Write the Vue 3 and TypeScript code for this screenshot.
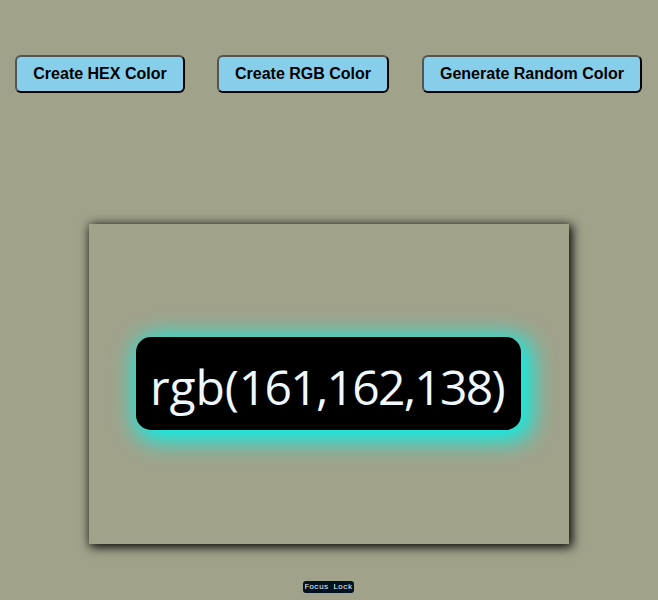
<script setup lang="ts">
import { computed, ref } from 'vue'

const color = ref('rgb(161,162,138)')
const rnd = (): number => Math.floor(Math.random() * 256)

const prefix = computed(() => (color.value.startsWith('rgb(') ? 'rgb(' : '#'))
const digits = computed(() => color.value.slice(prefix.value.length))

function createRgb(): void {
  color.value = `rgb(${rnd()},${rnd()},${rnd()})`
}
function createHex(): void {
  color.value = '#' + [rnd(), rnd(), rnd()].map((n) => n.toString(16).padStart(2, '0')).join('')
}
function createRandom(): void {
  if (Math.random() < 0.5) createHex()
  else createRgb()
}
</script>

<template>
  <main class="page" :style="{ backgroundColor: color }">
    <div class="buttons">
      <button class="btn hex" @click="createHex">Create HEX Color</button>
      <button class="btn rgb" @click="createRgb">Create RGB Color</button>
      <button class="btn random" @click="createRandom">Generate Random Color</button>
    </div>
    <section class="card">
      <div class="value"><span class="prefix">{{ prefix }}</span><span class="digits">{{ digits }}</span></div>
    </section>
    <footer class="badge">Focus Lock</footer>
  </main>
</template>

<style>
body {
  margin: 0;
}
</style>

<style scoped>
.page {
  box-sizing: border-box;
  height: 600px;
  padding-top: 55px;
  display: flex;
  flex-direction: column;
  align-items: center;
  overflow: hidden;
}
.buttons {
  box-sizing: border-box;
  width: 100%;
  padding: 0 16px 0 15px;
  display: flex;
}
.btn {
  box-sizing: border-box;
  height: 38px;
  padding: 0;
  border: 2px outset #000;
  border-radius: 6px;
  background: skyblue;
  color: #000;
  font: bold 16px "Liberation Sans", Arial, sans-serif;
  white-space: nowrap;
}
.hex {
  width: 170px;
}
.rgb {
  width: 172px;
  margin: 0 33px 0 32px;
}
.random {
  width: 220px;
}
.card {
  box-sizing: border-box;
  width: 480px;
  height: 320px;
  margin-top: 131px;
  padding: 113px 0 0 47px;
  box-shadow: 2px 2px 10px 1px #000;
}
.value {
  box-sizing: border-box;
  width: 385px;
  height: 93px;
  padding: 3px 0 0 14px;
  border-radius: 15px;
  background: #000;
  color: aliceblue;
  box-shadow: 5px 5px 25px 5px #00f5eb;
  font: 48px/93px "Open Sans", "Noto Sans", sans-serif;
  white-space: nowrap;
}
.prefix {
  letter-spacing: -0.1px;
}
.digits {
  letter-spacing: -1.75px;
}
.badge {
  box-sizing: border-box;
  width: 51px;
  height: 12px;
  margin: 37px 1px 0 0;
  border-radius: 3px;
  background: #001220;
  color: aliceblue;
  font: 8px/12px "Liberation Mono", monospace;
  text-align: center;
}
</style>
